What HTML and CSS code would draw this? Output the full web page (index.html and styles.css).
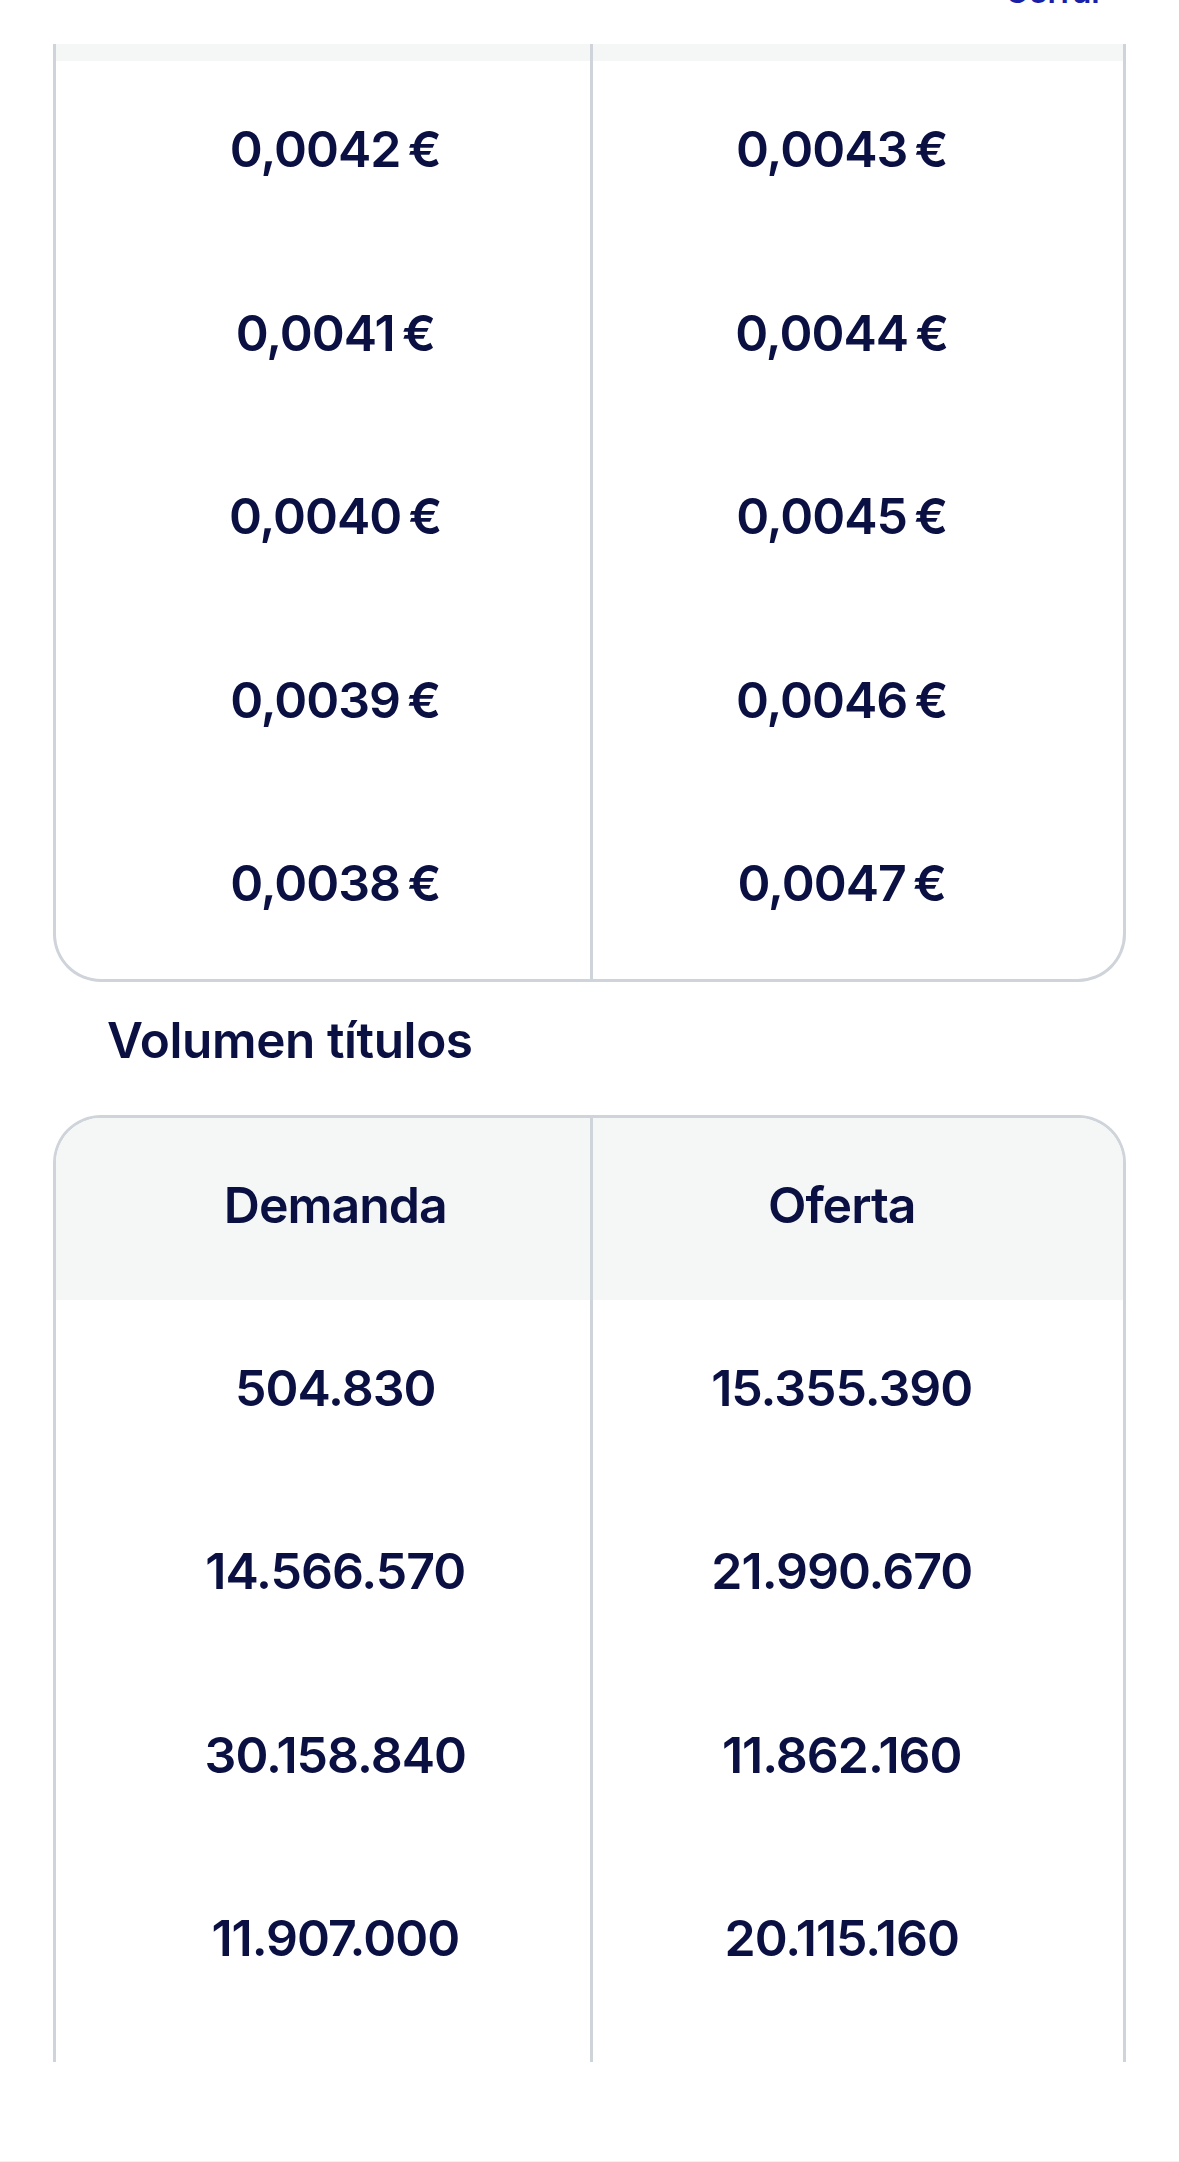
FILE: index.html
```html
<!DOCTYPE html>
<html lang="es">
<head>
<meta charset="utf-8">
<title>Libro de órdenes</title>
<link rel="stylesheet" href="styles.css">
</head>
<body>
<div class="page">
  <header class="topbar">
    <a class="close-link" href="#">Cerrar</a>
  </header>

  <section class="book book--cut-top">
    <div class="book-head book-head--cut"><div class="cell"></div><div class="cell"></div></div>
    <div class="book-row"><div class="cell">0,0042&#8201;€</div><div class="cell">0,0043&#8201;€</div></div>
    <div class="book-row"><div class="cell">0,0041&#8201;€</div><div class="cell">0,0044&#8201;€</div></div>
    <div class="book-row"><div class="cell">0,0040&#8201;€</div><div class="cell">0,0045&#8201;€</div></div>
    <div class="book-row"><div class="cell">0,0039&#8201;€</div><div class="cell">0,0046&#8201;€</div></div>
    <div class="book-row"><div class="cell">0,0038&#8201;€</div><div class="cell">0,0047&#8201;€</div></div>
  </section>

  <h2 class="section-title">Volumen títulos</h2>

  <section class="book book--cut-bottom">
    <div class="book-head"><div class="cell">Demanda</div><div class="cell">Oferta</div></div>
    <div class="book-row"><div class="cell">504.830</div><div class="cell">15.355.390</div></div>
    <div class="book-row"><div class="cell">14.566.570</div><div class="cell">21.990.670</div></div>
    <div class="book-row"><div class="cell">30.158.840</div><div class="cell">11.862.160</div></div>
    <div class="book-row"><div class="cell">11.907.000</div><div class="cell">20.115.160</div></div>
    <div class="book-row book-row--cut"><div class="cell"></div><div class="cell"></div></div>
  </section>

  <footer class="bottombar"></footer>
</div>
</body>
</html>
```

FILE: styles.css
```css
* { box-sizing: border-box; }

html, body {
  margin: 0;
  padding: 0;
  width: 1179px;
  height: 2162px;
  overflow: hidden;
  background: #ffffff;
}

body {
  font-family: Inter, "Noto Sans", "Liberation Sans", sans-serif;
  color: #0b1042;
}

.page {
  width: 1179px;
  height: 2162px;
  overflow: hidden;
  display: flex;
  flex-direction: column;
}

.topbar {
  height: 44px;
  flex: none;
  overflow: hidden;
  display: flex;
  justify-content: flex-end;
  padding-right: 75px;
  background: #ffffff;
}

.close-link {
  font-size: 32px;
  line-height: 1;
  font-weight: 600;
  color: #1a1fa8;
  text-decoration: none;
  margin-top: -24px;
}

.book {
  margin: 0 53px;
  border: 3px solid #cfd3da;
  flex: none;
  overflow: hidden;
}

.book--cut-top {
  border-top: none;
  border-radius: 0 0 48px 48px;
}

.book--cut-bottom {
  border-bottom: none;
  border-radius: 48px 48px 0 0;
}

.book-head,
.book-row {
  display: grid;
  grid-template-columns: 1fr 1fr;
}

.book-head {
  background: #f5f7f7;
  height: 182px;
}

.book-head--cut {
  height: 17px;
}

.book-row {
  height: 183.5px;
}

.book-row--cut {
  height: 28px;
}

.cell {
  display: flex;
  align-items: center;
  justify-content: center;
  padding: 0 0 7px 25px;
  font-size: 50px;
  font-weight: 600;
  letter-spacing: -1px;
  white-space: nowrap;
}

.cell + .cell {
  border-left: 3px solid #cfd3da;
  padding: 0 32px 7px 0;
}

.section-title {
  margin: 0;
  padding: 34px 0 0 107px;
  height: 133px;
  flex: none;
  font-size: 49.5px;
  line-height: 1;
  font-weight: 600;
  letter-spacing: -0.4px;
}

.bottombar {
  flex: 1;
  background: #ffffff;
  border-bottom: 1px solid #f1f2f3;
}
```
